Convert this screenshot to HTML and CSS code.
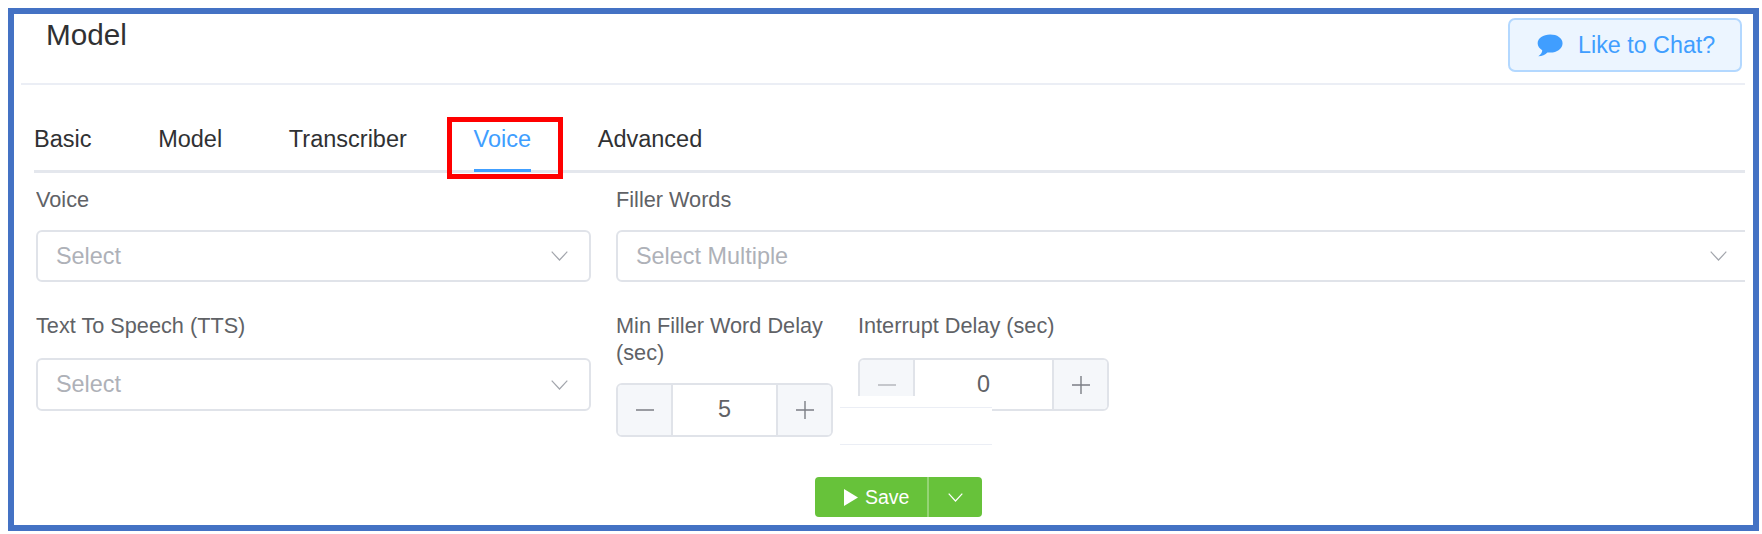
FILE: index.html
```html
<!DOCTYPE html>
<html lang="en">
<head>
<meta charset="utf-8">
<title>Model</title>
<link rel="stylesheet" href="styles.css">
</head>
<body>
<main class="frame">
  <header class="header">
    <h1 class="title">Model</h1>
    <div class="chat">
      <svg class="chat-icon" viewBox="0 0 27 24" aria-hidden="true"><path d="M13.7 0.5C6.4 0.5 0.6 4.3 0.6 9.6c0 3 1.9 5.6 4.8 7.3 0 1.9-1.1 4.2-4.1 6.3 3.9 0 7.4-1.5 9.5-4 0.9 0.1 1.9 0.2 2.9 0.2 7.2 0 12.9-4.3 12.9-9.8S20.9 0.5 13.7 0.5z"/></svg>
      <span>Like to Chat?</span>
    </div>
  </header>

  <nav class="tabs">
    <div class="tab">Basic</div>
    <div class="tab">Model</div>
    <div class="tab">Transcriber</div>
    <div class="tab tab-active">Voice</div>
    <div class="tab">Advanced</div>
  </nav>

  <section class="form">
    <div class="row">
      <div class="field field-main">
        <div class="label">Voice</div>
        <div class="select"><span>Select</span><svg class="chevron" viewBox="0 0 17 10" aria-hidden="true"><path d="M0.7 0.7 8.5 9 16.3 0.7"/></svg></div>
      </div>
      <div class="field field-wide">
        <div class="label">Filler Words</div>
        <div class="select"><span>Select Multiple</span><svg class="chevron" viewBox="0 0 17 10" aria-hidden="true"><path d="M0.7 0.7 8.5 9 16.3 0.7"/></svg></div>
      </div>
    </div>

    <div class="row row-second">
      <div class="field field-main">
        <div class="label label-loose">Text To Speech (TTS)</div>
        <div class="select select-tall"><span>Select</span><svg class="chevron" viewBox="0 0 17 10" aria-hidden="true"><path d="M0.7 0.7 8.5 9 16.3 0.7"/></svg></div>
      </div>
      <div class="field field-min">
        <div class="label">Min Filler Word Delay (sec)</div>
        <div class="number number-tall">
          <div class="step"><svg class="step-icon" viewBox="0 0 18 18" aria-hidden="true"><path d="M0 9H18"/></svg></div>
          <div class="value">5</div>
          <div class="step step-right"><svg class="step-icon" viewBox="0 0 18 18" aria-hidden="true"><path d="M0 9H18M9 0V18"/></svg></div>
        </div>
      </div>
      <div class="field field-interrupt">
        <div class="label label-loose">Interrupt Delay (sec)</div>
        <div class="number">
          <div class="step step-disabled"><svg class="step-icon" viewBox="0 0 18 18" aria-hidden="true"><path d="M0 9H18"/></svg></div>
          <div class="value">0</div>
          <div class="step step-right"><svg class="step-icon" viewBox="0 0 18 18" aria-hidden="true"><path d="M0 9H18M9 0V18"/></svg></div>
        </div>
        <div class="patch"></div>
      </div>
    </div>

    <div class="save">
      <div class="save-main"><svg class="play" viewBox="0 0 14 17" aria-hidden="true"><path d="M0 0 14 8.5 0 17z"/></svg><span>Save</span></div>
      <div class="save-more"><svg class="save-chevron" viewBox="0 0 15 9" aria-hidden="true"><path d="M0.7 0.7 7.5 8 14.3 0.7"/></svg></div>
    </div>
  </section>
</main>
</body>
</html>
```
FILE: styles.css
```css
* {
  box-sizing: border-box;
}

html,
body {
  margin: 0;
  background: #fff;
}

body {
  padding: 8px 0 0 8px;
  font-family: "Liberation Sans", Arial, sans-serif;
}

.frame {
  width: 1751px;
  height: 523px;
  border: 6px solid #4472c4;
  background: #fff;
  overflow: hidden;
}

.header {
  display: flex;
  justify-content: space-between;
  align-items: flex-start;
  width: 1724px;
  height: 71px;
  margin-left: 7px;
  padding: 4px 3px 0 25px;
  border-bottom: 2px solid #ebeef5;
}

.title {
  margin: 0;
  font-size: 29.7px;
  font-weight: 400;
  line-height: 34px;
  color: #303133;
}

.chat {
  display: flex;
  align-items: center;
  width: 234px;
  height: 54px;
  padding-left: 27px;
  border: 2px solid #b3d8ff;
  border-radius: 7px;
  background: #ecf5ff;
  color: #409eff;
  font-size: 23.3px;
}

.chat-icon {
  width: 26px;
  height: 23px;
  margin-right: 15px;
  fill: #409eff;
}

.tabs {
  display: flex;
  gap: 66.7px;
  width: 1711px;
  height: 88px;
  margin-left: 20px;
  padding: 40px 0 0;
  border-bottom: 3px solid #e4e7ed;
}

.tab {
  position: relative;
  height: 45px;
  font-size: 23.5px;
  line-height: 28px;
  color: #303133;
}

.tab-active {
  color: #409eff;
}

.tab-active::after {
  content: "";
  position: absolute;
  left: 0;
  right: 0;
  bottom: -2px;
  height: 3px;
  background: #409eff;
}

.tab-active::before {
  content: "";
  position: absolute;
  top: -8px;
  left: -27px;
  right: -32px;
  bottom: -9px;
  border: 5px solid #f00;
  pointer-events: none;
}

.form {
  width: 1709px;
  padding-top: 13px;
  margin-left: 22px;
  overflow: hidden;
}

.row {
  display: flex;
  gap: 25px;
}

.row-second {
  margin-top: 30px;
}

.field {
  position: relative;
  flex: none;
}

.field-main {
  width: 555px;
}

.field-wide {
  width: 1134px;
}

.field-min {
  width: 217px;
}

.field-interrupt {
  width: 251px;
}

.label {
  margin-bottom: 17px;
  font-size: 21.7px;
  line-height: 27px;
  color: #606266;
}

.label-loose {
  margin-bottom: 19px;
}

.select {
  display: flex;
  align-items: center;
  justify-content: space-between;
  height: 52px;
  padding: 0 21px 0 18px;
  border: 2px solid #e0e3e9;
  border-radius: 6px;
  font-size: 23.4px;
  color: #aeb1b8;
}

.select-tall {
  height: 53px;
}

.chevron {
  width: 17px;
  height: 10px;
  fill: none;
  stroke: #a3a6ad;
  stroke-width: 1.2;
}

.number {
  display: flex;
  width: 100%;
  height: 53px;
  border: 2px solid #e0e3e9;
  border-radius: 6px;
  overflow: hidden;
}

.number-tall {
  height: 54px;
}

.step {
  display: flex;
  flex: none;
  align-items: center;
  justify-content: center;
  width: 55px;
  background: #f5f7fa;
  border-right: 2px solid #e0e3e9;
}

.step-right {
  border-right: 0;
  border-left: 2px solid #e0e3e9;
}

.step-icon {
  width: 18px;
  height: 18px;
  fill: none;
  stroke: #7b7e85;
  stroke-width: 1.4;
}

.step-disabled .step-icon {
  stroke: #b4b7bd;
}

.value {
  flex: 1;
  text-align: center;
  font-size: 23.4px;
  line-height: 49px;
  color: #606266;
}

.patch {
  position: absolute;
  left: 0;
  top: 84px;
  width: 134px;
  height: 11px;
  background: #fff;
}

.patch::after {
  content: "";
  position: absolute;
  top: 11px;
  right: 0;
  width: 152px;
  height: 36px;
  background: #fff;
  border-top: 1px solid #ebeef5;
  border-bottom: 1px solid #ebeef5;
}

.save {
  display: flex;
  width: 167px;
  height: 40px;
  margin: 40px 0 0 779px;
  border-radius: 4px;
  background: #67c23a;
  color: #fff;
}

.save-main {
  display: flex;
  align-items: center;
  width: 114px;
  padding-left: 29px;
  border-right: 2px solid #95d475;
  font-size: 19.5px;
}

.play {
  width: 14px;
  height: 17px;
  margin-right: 7px;
  fill: #fff;
}

.save-more {
  display: flex;
  flex: 1;
  align-items: center;
  justify-content: center;
}

.save-chevron {
  width: 15px;
  height: 9px;
  fill: none;
  stroke: #fff;
  stroke-width: 1.2;
}
```
